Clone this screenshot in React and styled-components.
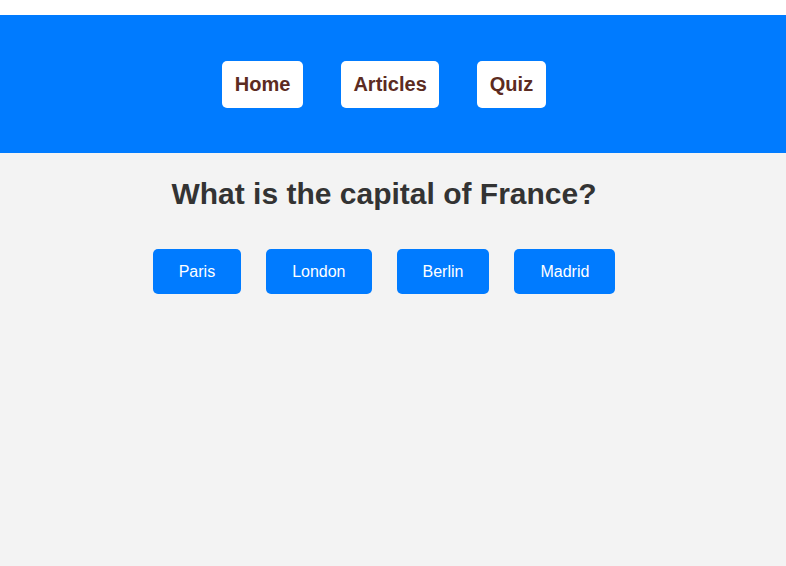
import React from "react";
import styled, { createGlobalStyle } from "styled-components";

const GlobalStyle = createGlobalStyle`
  html, body {
    margin: 0;
    background: #ffffff;
    font-family: "Liberation Sans", Arial, sans-serif;
  }
`;

const Page = styled.div`
  margin-top: 15px;
  min-height: calc(100vh - 15px);
  background: #f3f3f3;
`;

const Header = styled.header`
  background: #007bff;
  height: 138px;
  padding-right: 18px;
  display: flex;
  align-items: center;
  justify-content: center;
  gap: 38px;
`;

const NavButton = styled.button`
  background: #ffffff;
  border: none;
  border-radius: 5px;
  padding: 12px 12.5px;
  font-family: inherit;
  font-size: 20px;
  line-height: 23px;
  font-weight: bold;
  color: #5c2b21;
  cursor: pointer;
`;

const Main = styled.main`
  padding-right: 18px;
  display: flex;
  flex-direction: column;
  align-items: center;
`;

const Question = styled.h1`
  margin: 24px 0 0;
  font-size: 30px;
  line-height: 34px;
  font-weight: bold;
  color: #333333;
`;

const Options = styled.div`
  margin-top: 38px;
  display: flex;
  gap: 25px;
`;

const Option = styled.button`
  background: #007bff;
  border: none;
  border-radius: 5px;
  padding: 0 26px;
  height: 45px;
  font-family: inherit;
  font-size: 16px;
  color: #ffffff;
  cursor: pointer;
`;

const answers = ["Paris", "London", "Berlin", "Madrid"];

export default function App() {
  return (
    <>
      <GlobalStyle />
      <Page>
        <Header>
          <NavButton>Home</NavButton>
          <NavButton>Articles</NavButton>
          <NavButton>Quiz</NavButton>
        </Header>
        <Main>
          <Question>What is the capital of France?</Question>
          <Options>
            {answers.map((a) => (
              <Option key={a}>{a}</Option>
            ))}
          </Options>
        </Main>
      </Page>
    </>
  );
}
